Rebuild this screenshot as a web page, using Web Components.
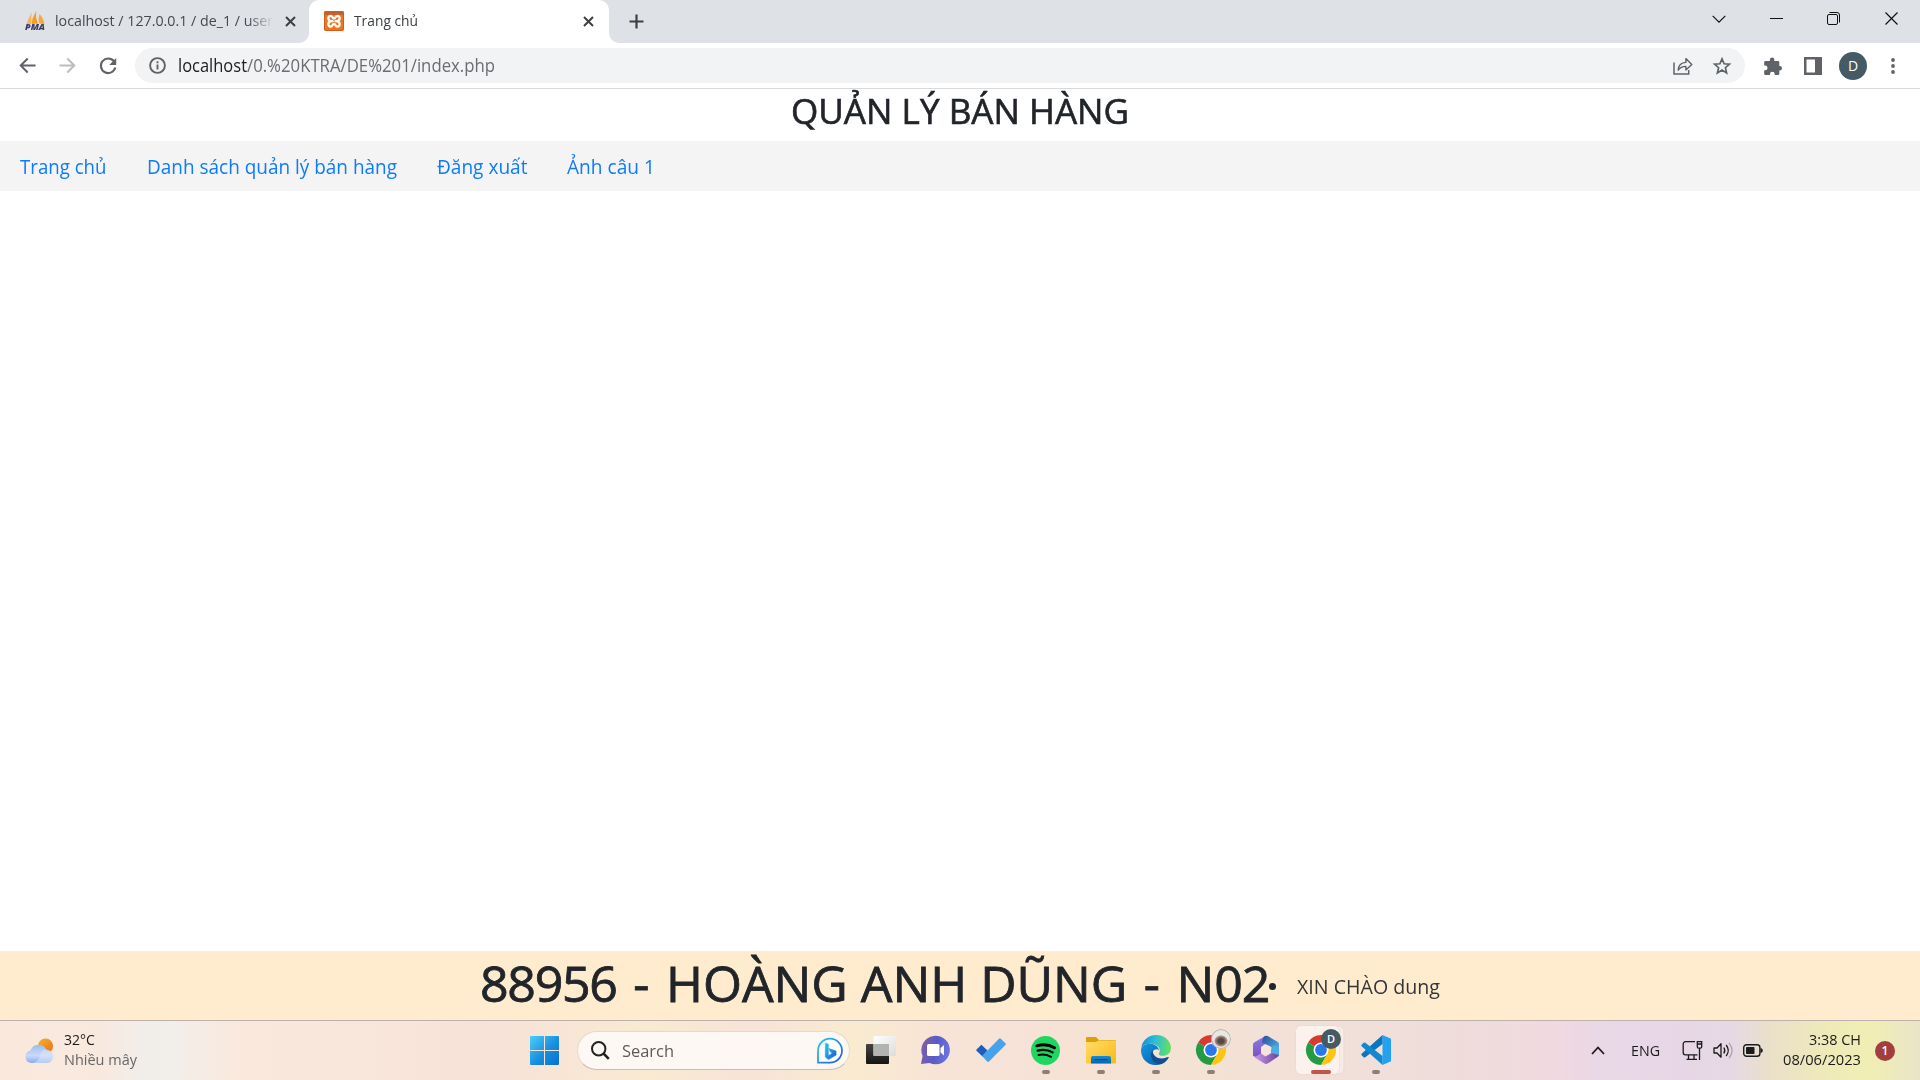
<!DOCTYPE html>
<html lang="vi">
<head>
<meta charset="utf-8">
<title>Trang chủ</title>
<style>
html,body{margin:0;height:100%;overflow:hidden;background:#fff;font-family:"Open Sans","Noto Sans",sans-serif}
</style>
</head>
<body>
<desktop-screen></desktop-screen>
<script>
const define=(name,html,init)=>{
  const t=document.createElement('template');t.innerHTML=html;
  customElements.define(name,class extends HTMLElement{
    constructor(){super();this.attachShadow({mode:'open'});}
    connectedCallback(){
      if(this.ready)return;this.ready=true;
      this.shadowRoot.appendChild(document.importNode(t.content,true));
      if(init)init(this,this.shadowRoot);
    }
  });
};

// Single line of text condensed or widened to the width in the w attribute.
define('fit-text',`<style>:host{display:block;white-space:nowrap;flex:none;text-align:left}span{display:inline-block;transform-origin:0 50%}</style><span><slot></slot></span>`,(h,r)=>{
  const w=+h.getAttribute('w'),s=r.querySelector('span');
  const n=s.getBoundingClientRect().width;
  h.style.width=w+'px';
  if(n)s.style.transform='scaleX('+(w/n)+')';
});

const S='fill="none" stroke="currentColor"';
const chrome=`<circle cx="15" cy="15" r="15" fill="#fff"/><path d="M15 15 2 7.5A15 15 0 0 1 28 7.5H15Z" fill="#d93a2f"/><path d="M2 7.5A15 15 0 0 0 15 30l6.5-11.2L15 15Z" fill="#249a45"/><path d="M28 7.5A15 15 0 0 1 15 30l6.5-11.2L15 7.5Z" fill="#fdc411"/><circle cx="15" cy="15" r="7.5" fill="#fff"/><circle cx="15" cy="15" r="5.9" fill="#2b78ee"/>`;
const ICONS={
pma:[20,20,`<path d="M7 1Q3 8 1.500 13.500L6.500 12.500Q5.500 6 7 1Z" fill="#fbb25a"/><path d="M11.500 0Q6.500 7 7 13L13 12.500Q10 6 11.500 0Z" fill="#f89c1f"/><path d="M14.500 3Q13 8 14 12.300L19.500 13.500Q18.500 7 14.500 3Z" fill="#f9a63a"/>`],
xampp:[20,20,`<rect width="20" height="20" rx="2" fill="#ef7420"/><path d="M0 4V2a2 2 0 0 1 2-2h16a2 2 0 0 1 2 2v2Z" fill="#c9602a"/><rect x=".5" y=".5" width="19" height="19" rx="1.500" fill="none" stroke="#d45f14"/><g fill="none" stroke="#fff" stroke-width="2.300" stroke-linejoin="round" stroke-linecap="round"><path d="M8.500 10.200C3 10.500 3.500 4.800 6.700 4.800c2 0 1.600 2.700 3.300 2.700s1.300-2.700 3.300-2.700c3.200 0 3.700 5.700-1.800 5.400M8.500 10.200c-5.500-.3-5 5.400-1.800 5.400 2 0 1.600-2.700 3.300-2.700s1.300 2.700 3.300 2.700c3.200 0 3.700-5.700-1.800-5.400"/></g>`],
x:[11,11,`<path d="M1 1l9 9M10 1l-9 9" ${S} stroke-width="2"/>`],
plus:[15,15,`<path d="M7.500.5v14M.5 7.500h14" ${S} stroke-width="2.200"/>`],
back:[17,17,`<path d="M16.500 8.500H2M8.700 1.500l-7 7 7 7" ${S} stroke-width="2"/>`],
fwd:[17,17,`<path d="M.5 8.500H15M8.300 1.500l7 7-7 7" ${S} stroke-width="2"/>`],
reload:[18,18,`<path d="M15 4.300A7.300 7.300 0 1 0 16.300 10.500" ${S} stroke-width="2.100"/><path d="M17.200 1v7h-7z" fill="currentColor"/>`],
info:[17,17,`<circle cx="8.500" cy="8.500" r="7.400" ${S} stroke-width="1.900"/><path d="M8.500 7.500v5M8.500 4.300v2" ${S} stroke-width="1.900"/>`],
share:[20,18,`<path d="M1 5.500v11.600h14.700V13" ${S} stroke-width="1.500"/><path d="M5.200 13.200C5.500 8.300 8.500 5.600 12.900 5.400V1.600L18.800 7.500 12.900 13V9.400C9.500 9.300 7.200 10.500 5.200 13.200Z" ${S} stroke-width="1.400" stroke-linejoin="round"/>`],
star:[18,17,`<path d="M9 1.900l2.100 4.900 5.300.4-4 3.500 1.200 5.200L9 13.100 4.400 15.900l1.200-5.200-4-3.500 5.300-.4Z" ${S} stroke-width="1.700"/>`],
puzzle:[18,18,`<path d="M1.500 4h4.400V2.600a2.200 2.200 0 0 1 4.400 0V4h3.700a1.300 1.300 0 0 1 1.300 1.300V9h.5a2.200 2.200 0 0 1 0 4.400h-.5v3.300a1.300 1.300 0 0 1-1.300 1.300h-3.300v-1a2.300 2.300 0 0 0-4.700 0v1H1.500A1.300 1.300 0 0 1 .2 16.700v-3.400h1a2.300 2.300 0 0 0 0-4.700h-1V5.300A1.300 1.300 0 0 1 1.500 4Z" fill="currentColor"/>`],
panel:[18,18,`<path d="M0 0h18v18H0ZM2.500 2.500v13h8.500v-13Z" fill="currentColor" fill-rule="evenodd"/>`],
dots:[4,16,`<circle cx="2" cy="2" r="1.900" fill="currentColor"/><circle cx="2" cy="8" r="1.900" fill="currentColor"/><circle cx="2" cy="14" r="1.900" fill="currentColor"/>`],
down:[14,8,`<path d="M.7.8 7 7.200 13.300.8" ${S} stroke-width="1.200"/>`],
min:[13,2,`<path d="M0 .5h13" ${S} stroke-width="1"/>`],
restore:[13,13,`<rect x=".5" y="2.500" width="10" height="10" rx="1.500" ${S}/><path d="M2.500.5H10A2.500 2.500 0 0 1 12.500 3v7.500" ${S}/>`],
close:[13,13,`<path d="M.5.5l12 12M12.500.5l-12 12" ${S} stroke-width="1.200"/>`],
weather:[31,26,`<defs><linearGradient id="a" y2="1" x2="0"><stop stop-color="#9dbcf0"/><stop offset=".6" stop-color="#c8dafb"/><stop offset="1" stop-color="#8aaae6"/></linearGradient><linearGradient id="s" x2="1" y2="1"><stop stop-color="#eeb62b"/><stop offset="1" stop-color="#ef6d16"/></linearGradient></defs><circle cx="21.500" cy="8" r="7.600" fill="url(#s)"/><path d="M7 25a6.300 6.300 0 0 1-.6-12.400A8.600 8.600 0 0 1 22.500 12 6.600 6.600 0 0 1 24 25Z" fill="url(#a)"/><path d="M16.500 15q3-5 8-3 5 2 5.600 6.500a6.500 6.500 0 0 1-6.100 6.500H9q7-2 7.500-10Z" fill="#dbe7fc" opacity=".55"/>`],
win:[29,29,`<defs><linearGradient id="w" x2="1" y2="1"><stop stop-color="#4ccdfb"/><stop offset=".55" stop-color="#178fe0"/><stop offset="1" stop-color="#0871cf"/></linearGradient></defs><path d="M1 0h13v14H0V1a1 1 0 0 1 1-1ZM15 0h13a1 1 0 0 1 1 1v13H15ZM0 15h14v14H1a1 1 0 0 1-1-1ZM15 15h14v13a1 1 0 0 1-1 1H15Z" fill="url(#w)"/>`],
search:[19,19,`<circle cx="7.700" cy="7.700" r="6.700" ${S} stroke-width="2"/><path d="M12.500 12.500l5.300 5.300" ${S} stroke-width="2.500"/>`],
bing:[26,26,`<defs><linearGradient id="b" x2="1" y2="1"><stop stop-color="#26c9ee"/><stop offset="1" stop-color="#2156c8"/></linearGradient></defs><path d="M1 24.700V13A12 12 0 1 1 13 24.700Z" fill="#fff" stroke="url(#b)" stroke-width="1.700" stroke-linejoin="round"/><path d="M8.300 5l3 1.100v11.600l4.200-2.600-2.100-1-1.400-3.500 7.100 2.500v4l-7.700 4.500L8.300 19Z" fill="url(#b)" stroke="url(#b)" stroke-width=".6" stroke-linejoin="round"/>`],
task:[30,28,`<defs><linearGradient id="t" y2="1" x2="0"><stop stop-color="#454443"/><stop offset="1" stop-color="#141413"/></linearGradient><linearGradient id="v" x2="1" y2="1"><stop stop-color="#fff"/><stop offset="1" stop-color="#dcdcdc"/></linearGradient></defs><rect y="8" width="23" height="20" rx="1" fill="url(#t)"/><rect x="7.500" width="22.500" height="20" rx="1" fill="url(#v)"/><path d="M7.500 8H23v12H8.500a1 1 0 0 1-1-1Z" fill="#b3b3b2"/>`],
chat:[29,29,`<defs><linearGradient id="c" x1="0" y1=".4" x2="1" y2=".6"><stop stop-color="#815da8"/><stop offset=".5" stop-color="#5a5bc8"/><stop offset="1" stop-color="#6d77dd"/></linearGradient></defs><path d="M0 28 1.600 20A14.300 14.300 0 1 1 8.500 27Z" fill="url(#c)"/><rect x="6" y="8" width="12.500" height="12" rx="1.500" fill="#fff"/><path d="M19.500 12l3.500-3v10.500l-3.500-3Z" fill="#fff"/>`],
todo:[30,24,`<path d="M5.400 6.700 11.500 12.600 6.500 18.500.5 12.800a1 1 0 0 1 0-1.300Z" fill="#1b5ec0"/><path d="M6.100 18 23 .8a1.300 1.300 0 0 1 1.800 0l4.600 4.500a1.300 1.300 0 0 1 0 1.800L13 23.500a1.300 1.300 0 0 1-1.800 0Z" fill="#44a3ec"/>`],
spotify:[29,29,`<circle cx="14.500" cy="14.500" r="14.500" fill="#1ed760"/><g fill="none" stroke="#000" stroke-linecap="round"><path d="M5.800 9.800Q15.500 7 23.500 11.700" stroke-width="2.900"/><path d="M6.700 14.600Q14.800 12.500 21.500 16.300" stroke-width="2.400"/><path d="M7.500 19Q14 17.500 20 20.800" stroke-width="2"/></g>`],
folder:[30,27,`<defs><linearGradient id="f" x2="1" y2="1"><stop stop-color="#ffdd6d"/><stop offset="1" stop-color="#fbb910"/></linearGradient><linearGradient id="g" y2="1" x2="0"><stop stop-color="#168cd8"/><stop offset="1" stop-color="#0666b4"/></linearGradient></defs><path d="M1 0h9l3 3h16a1 1 0 0 1 1 1v5H0V1a1 1 0 0 1 1-1Z" fill="#dda005"/><path d="M0 5h10l2.500-1.500H30V25.500a1 1 0 0 1-1 1H1a1 1 0 0 1-1-1Z" fill="url(#f)"/><path d="M5 26.500V21a2 2 0 0 1 2-2h16a2 2 0 0 1 2 2v5.500Z" fill="url(#g)"/><path d="M8.500 22.700h13" stroke="#064987" stroke-width="1.200"/>`],
edge:[30,30,`<defs><linearGradient id="e" x1="0" y1=".4" x2="1" y2=".5"><stop stop-color="#178ddb"/><stop offset=".45" stop-color="#2dbfd3"/><stop offset="1" stop-color="#68e05f"/></linearGradient><linearGradient id="h" y2="1" x2=".7"><stop stop-color="#1598dd"/><stop offset="1" stop-color="#0c68bb"/></linearGradient></defs><path d="M.3 13C1 6 7 0 15 0c9 0 15 6.400 15 13 0 5-3.800 7.800-8 7.800-3.300 0-4.700-1.300-4.200-2.400 2.700-3.500-.3-8.400-5.600-9.500C7 8 2 9.500.3 13Z" fill="url(#e)"/><path d="M0 15C.2 11 4.500 8.600 9 8.700c5 .1 8.700 3 9 6.800-1.500-2-5.200-1.500-6.500 1.500-1.500 4 .5 10 6.200 12.700C8 31.500 0 25 0 15Z" fill="url(#h)"/><path d="M11.700 15C8 19 10 27.500 17.700 29.700c4.500-.6 8-3.200 10-7 .2-.7-.2-.9-.8-.6-7 3.400-15.700.4-15.200-7.100Z" fill="#104f94"/>`],
chrome:[30,30,chrome],
m365:[26,28,`<defs><linearGradient id="m" y2="1" x2="0"><stop stop-color="#8c7be3"/><stop offset="1" stop-color="#7a50c4"/></linearGradient><linearGradient id="n" x2="1" y2="1"><stop stop-color="#274b9d"/><stop offset="1" stop-color="#58c6f5"/></linearGradient><linearGradient id="o" x2="1"><stop stop-color="#c99be8"/><stop offset="1" stop-color="#6c3f9f"/></linearGradient></defs><path d="M12 0 1.500 6.200A3 3 0 0 0 0 8.800V20l8 2.500V11L16 5Z" fill="url(#m)"/><path d="M12 0q2-.5 4 .8l8.500 5A3 3 0 0 1 26 8.500V19l-7.500-2v-6L9 6.500Q9.500 1.500 12 0Z" fill="url(#n)"/><path d="M26 18.500a3 3 0 0 1-1.500 2.600L15 27.300a4 4 0 0 1-4 0L1.500 21.500 8 17.500l4.500 3 6-3.500V13Z" fill="url(#o)"/><circle cx="13" cy="14" r="4.800" fill="#f5e5da"/><path d="M20 9l6 3v7l-7.500-2Z" fill="#4aaeea"/>`],
vscode:[30,30,`<path d="M21.500 0 30 3.700V26.300L21.500 30Z" fill="#22a2f1"/><path d="M21.500 0 .6 18.800a1 1 0 0 0 0 1.500l2 1.900a1.300 1.300 0 0 0 1.700 0L21.500 8.900Z" fill="#0b76bd"/><path d="M21.500 30 .6 11.200a1 1 0 0 1 0-1.500l2-1.900a1.300 1.300 0 0 1 1.700 0L21.500 21.100Z" fill="#1189d2"/>`],
up:[14,9,`<path d="M1 8 7 1.500 13 8" ${S} stroke-width="1.800"/>`],
net:[21,21,`<path d="M13 1.700H3.500a2.300 2.300 0 0 0-2.300 2.300V12.500a2.300 2.300 0 0 0 2.300 2.300H15.500M6.500 15v4M12 15v4M4.500 19.400h10.500" ${S} stroke-width="1.300"/><path d="M15.300 1.700h4.400v5a1.500 1.500 0 0 1-1.500 1.500h-1.400a1.500 1.500 0 0 1-1.500-1.500ZM15.300 4h4.400M17.500 8.500V20" ${S} stroke-width="1.300"/>`],
sound:[20,17,`<path d="M1 6h3l4-4.200v13.400L4 11H1Z" ${S} stroke-width="1.300" stroke-linejoin="round"/><path d="M10.800 5.500q2 3 0 6M13.200 3q4.200 5.500 0 11" ${S} stroke-width="1.300"/><path d="M16 .8q6 7.700 0 15.400" fill="none" stroke="#aaa0ac" stroke-width="1.200"/>`],
battery:[20,13,`<rect x=".7" y=".7" width="16.200" height="11.600" rx="2.800" ${S} stroke-width="1.400"/><rect x="3" y="3" width="8.500" height="7" rx=".8" fill="currentColor"/><path d="M17.500 4v5q2.300-.4 2.300-2.500t-2.300-2.500Z" fill="currentColor"/>`]
};
define('ui-icon',`<style>:host{display:block;flex:none;line-height:0}svg{display:block;overflow:visible}</style><div></div>`,(h,r)=>{
  const [w,t,b]=ICONS[h.getAttribute('name')];
  r.querySelector('div').innerHTML=`<svg width="${w}" height="${t}" viewBox="0 0 ${w} ${t}">${b}</svg>`;
});

define('browser-tab',`<style>
:host{display:flex;align-items:center;height:43px;padding:0 15px 1px 15px;box-sizing:border-box;width:300px;flex:none;font-size:14.900px;line-height:20px;color:#45494d}
:host([active]){background:#fff;border-radius:10px 10px 0 0;color:#3c4043}
.t{flex:1;overflow:hidden;margin:0 11px 0 10px;height:24px;line-height:22px}
:host(:not([active])) .t{-webkit-mask:linear-gradient(90deg,#000 88%,transparent)}
ui-icon{color:#3c4043}
</style><slot name="icon"></slot><div class="t"><slot></slot></div><ui-icon name="x"></ui-icon>`);

define('pma-logo',`<style>:host{display:block;position:relative;width:20px;height:20px;flex:none}span{position:absolute;left:0;top:11px;font:italic 800 8px/10px "Open Sans",sans-serif;color:#3d3c66}</style><ui-icon name="pma"></ui-icon><span><fit-text w="20">PMA</fit-text></span>`);

define('tab-strip',`<style>
:host{display:flex;height:43px;background:#dee1e6;color:#202124;align-items:center}
.tabs{display:flex;background:linear-gradient(#dee1e6,#dee1e6) 0 0/100% 33px no-repeat,#fff}
.first{width:309px;padding-left:25px;padding-right:13.500px;border-bottom-right-radius:10px;background:#dee1e6}
.after{display:flex;align-items:center;flex:1;background:#dee1e6;border-bottom-left-radius:10px;padding-left:19.500px;box-sizing:border-box}
.wrap{display:flex;flex:1;align-self:stretch;background:#fff}
.plus{color:#3c4043}
.ctl{display:flex;align-items:center;margin-left:auto;padding-right:22px;padding-bottom:6px;color:#111}
.ctl ui-icon{margin-left:44px}
.ctl ui-icon:nth-child(4){margin-left:45px}
</style><div class="tabs"><browser-tab class="first"><pma-logo slot="icon"></pma-logo><fit-text w="218">localhost / 127.0.0.1 / de_1 / user</fit-text></browser-tab><browser-tab active><ui-icon slot="icon" name="xampp"></ui-icon><fit-text w="64">Trang chủ</fit-text></browser-tab></div>
<div class="wrap"><div class="after"><ui-icon class="plus" name="plus"></ui-icon><div class="ctl"><ui-icon name="down"></ui-icon><ui-icon name="min"></ui-icon><ui-icon name="restore"></ui-icon><ui-icon name="close"></ui-icon></div></div></div>`);

define('round-badge',`<style>:host{display:flex;align-items:center;justify-content:center;border-radius:50%;flex:none;color:#fff;background:#455a64}</style><slot></slot>`);

define('address-bar',`<style>
:host{display:flex;align-items:center;height:46px;box-sizing:border-box;border-bottom:1px solid #d9dadc;background:#fff;color:#5f6368;padding:0 25.500px 0 19px}
.back{margin-right:23px}.fwd{color:#bbbdbf;margin-right:23px}
.box{display:flex;align-items:center;flex:1;height:35px;border-radius:18px;background:#f1f3f4;margin:0 19px 0 18px;padding:0 14px;font-size:17.600px;line-height:24px}
.a{color:#202124;margin-left:12px}.b{color:#6a6e73}
.a,.b{padding-bottom:1px}
.share{margin-left:auto;margin-right:20.500px}
round-badge{width:28px;height:28px;font-size:14px;margin:0 23.500px 0 17px}
.panel{margin-left:22px}
</style><ui-icon class="back" name="back"></ui-icon><ui-icon class="fwd" name="fwd"></ui-icon><ui-icon name="reload"></ui-icon>
<div class="box"><ui-icon name="info"></ui-icon><fit-text class="a" w="69">localhost</fit-text><fit-text class="b" w="248">/0.%20KTRA/DE%201/index.php</fit-text><ui-icon class="share" name="share"></ui-icon><ui-icon name="star"></ui-icon></div>
<ui-icon name="puzzle"></ui-icon><ui-icon class="panel" name="panel"></ui-icon><round-badge>D</round-badge><ui-icon name="dots"></ui-icon>`);

define('site-nav',`<style>:host{display:flex;align-items:center;height:50px;box-sizing:border-box;background:#f4f4f4;padding:2px 0 0 20px;font-size:19.800px;line-height:30px;color:#0d7bfc}fit-text{margin-right:40px}</style>
<fit-text w="86.500">Trang chủ</fit-text><fit-text w="250">Danh sách quản lý bán hàng</fit-text><fit-text w="90.500">Đăng xuất</fit-text><fit-text w="88">Ảnh câu 1</fit-text>`);

define('site-page',`<style>
:host{display:flex;flex-direction:column;height:931px;color:#212529}
header{display:flex;justify-content:center;height:52px;padding-top:1px;box-sizing:border-box;font-size:34.300px;line-height:42px;-webkit-text-stroke:.6px #212529}
main{flex:1;background:#fff}
footer{display:flex;height:69px;box-sizing:border-box;padding-top:1px;background:#ffebcd;padding-left:480px;align-items:flex-start}
.id{font-size:49.300px;line-height:61px;-webkit-text-stroke:.8px #212529}
.num{letter-spacing:-1.300px}
.gap{word-spacing:3.500px}
i{width:7px;height:7px;border-radius:50%;background:#212529;margin:31px 21px 0 0}
.hi{font-size:19.500px;line-height:30px;margin-top:20px;color:#333639}
</style><header><fit-text w="338">QUẢN LÝ BÁN HÀNG</fit-text></header><site-nav></site-nav><main></main>
<footer><fit-text class="id" w="789"><span class="num">88956</span><span class="gap"> - </span>HOÀNG ANH DŨNG<span class="gap"> - </span>N<span class="num">02</span></fit-text><i></i><fit-text class="hi" w="143">XIN CHÀO dung</fit-text></footer>`);

define('task-item',`<style>
:host{display:flex;position:relative;width:55px;height:59px;align-items:center;justify-content:center;flex:none;padding-bottom:1px;box-sizing:border-box}
.dot{display:none;position:absolute;left:23.500px;top:49px;width:8px;height:4px;border-radius:2px;background:#8b8078}
:host([running]) .dot{display:block}
.plate{display:none;position:absolute;left:3px;top:5px;width:43px;height:48px;border-radius:5px;background:#fbf2ed;box-shadow:0 0 0 .5px #e7d8d2,5px 0 0 -.5px #f7ebe5,5px 0 0 .3px #e7d8d2}
:host([active]) .plate{display:block}
:host([active]) .dot{display:block;background:#c2544e;left:17.500px;width:20px}
.i{position:relative}
::slotted(round-badge){position:absolute;left:28px;top:8px;width:20px;height:20px;font-size:11px;font-weight:600}
</style><div class="plate"></div><div class="i"></div><div class="dot"></div><slot></slot>`,(h,r)=>{
  r.querySelector('.i').innerHTML=`<ui-icon name="${h.getAttribute('icon')}"></ui-icon>`;
});

define('task-bar',`<style>
:host{display:flex;align-items:center;height:60px;box-sizing:border-box;border-top:1px solid #bdb1ac;color:#1b1b1b;font-size:14.900px;line-height:20px;
background:linear-gradient(90deg,#fbe8dc 0,#f8e9df 100px,#f1eeea 145px,#f2eee9 175px,#fae8dc 240px,#f9e6da 380px,#f7e2d8 480px,#f9ead2 650px,#f7e3d8 750px,#f9ebd0 850px,#f7e3d7 950px,#f4e2d4 1200px,#f0dfda 1380px,#eedcda 1460px,#f0d9e0 1560px,#e9d8e6 1600px,#e7d7e6 1690px,#e6d9e3 1735px,#eae0c9 1770px,#efeab8 1830px,#f0eeb4 1870px,#eae4c8 1920px)}
.weather{display:flex;align-items:center;gap:9px;width:517px;box-sizing:border-box;padding-left:24px}
.lines{padding-bottom:4px}
.grey{color:#666}
.searchbox{display:flex;align-items:center;width:273px;height:39px;box-sizing:border-box;border-radius:20px;background:#fdf8f3;border:1px solid #e6d9cc;border-bottom-color:#c9bdb3;padding:0 6px 0 13px;margin:0 3px 0 5px;font-size:17.200px;line-height:24px;color:#5d5a58}
.searchbox ui-icon:first-child{color:#222;margin-right:12px}
.searchbox ui-icon:last-child{margin-left:auto}
.tray{display:flex;align-items:center;margin-left:auto;padding-right:25px}
.eng{margin:0 22px 0 26px;padding-bottom:2px}
.snd{margin:0 10px}
.clock{display:flex;flex-direction:column;align-items:flex-end;margin:0 14px 0 20px;padding-bottom:4px}
.tray round-badge{width:20px;height:20px;background:#a23e3b;font-size:12px;font-weight:600}
.photo{background:radial-gradient(ellipse 7px 6px at 50% 60%,#54484a 0 40%,#a68d75 80%,transparent 100%),#e9e7e6;box-shadow:inset 0 0 0 1px #b8b0ad}
</style>
<div class="weather"><ui-icon name="weather"></ui-icon><div class="lines"><fit-text w="31">32°C</fit-text><fit-text class="grey" w="73">Nhiều mây</fit-text></div></div>
<task-item icon="win"></task-item>
<div class="searchbox"><ui-icon name="search"></ui-icon><fit-text w="52">Search</fit-text><ui-icon name="bing"></ui-icon></div>
<task-item icon="task"></task-item><task-item icon="chat"></task-item><task-item icon="todo"></task-item><task-item icon="spotify" running></task-item><task-item icon="folder" running></task-item><task-item icon="edge" running></task-item><task-item icon="chrome" running><round-badge class="photo"></round-badge></task-item><task-item icon="m365"></task-item><task-item icon="chrome" active><round-badge>D</round-badge></task-item><task-item icon="vscode" running></task-item>
<div class="tray"><ui-icon name="up"></ui-icon><fit-text class="eng" w="29">ENG</fit-text><ui-icon name="net"></ui-icon><ui-icon class="snd" name="sound"></ui-icon><ui-icon name="battery"></ui-icon><div class="clock"><fit-text w="52">3:38 CH</fit-text><fit-text w="78">08/06/2023</fit-text></div><round-badge>1</round-badge></div>`);

define('desktop-screen',`<style>:host{display:flex;flex-direction:column;width:1920px;height:1080px;overflow:hidden}</style><tab-strip></tab-strip><address-bar></address-bar><site-page></site-page><task-bar></task-bar>`);
</script>
</body>
</html>
